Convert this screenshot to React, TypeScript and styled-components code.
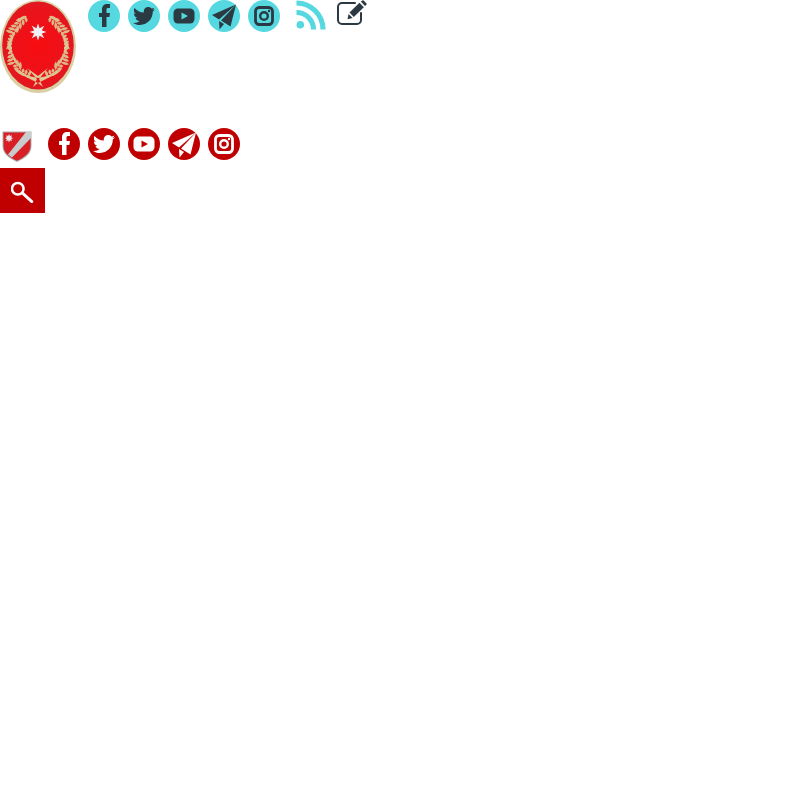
import React from "react";
import styled, { createGlobalStyle } from "styled-components";
import { FaTwitter } from "react-icons/fa";

const GlobalStyle = createGlobalStyle`
  html, body {
    margin: 0;
    padding: 0;
    background: #fff;
    font-family: "Liberation Sans", Arial, sans-serif;
  }
`;

const TopRow = styled.div`
  display: flex;
  align-items: flex-start;
  height: 128px;
`;

const LogoLink = styled.a`
  display: block;
  width: 76px;
  height: 93px;
  margin-right: 12px;
`;

const SocialList = styled.ul`
  display: flex;
  gap: 8px;
  margin: 0;
  padding: 0;
  list-style: none;
`;

const SocialItem = styled.li<{ $bg: string; $fg: string }>`
  display: flex;
  align-items: center;
  justify-content: center;
  width: 32px;
  height: 32px;
  border-radius: 50%;
  background: ${(p) => p.$bg};
  color: ${(p) => p.$fg};
`;

const RssLink = styled.a`
  display: block;
  width: 30px;
  height: 30px;
  margin-left: 16px;
  color: #55d8e0;
`;

const EditLink = styled.a`
  display: block;
  width: 31px;
  height: 26px;
  margin-left: 11px;
  color: #2b3a42;
`;

const BottomRow = styled.div`
  display: flex;
  align-items: flex-start;
  height: 40px;
`;

const ShieldLink = styled.a`
  display: block;
  width: 30px;
  height: 32px;
  margin: 3px 16px 0 2px;
`;

const SearchButton = styled.button`
  display: flex;
  align-items: center;
  justify-content: center;
  width: 45px;
  height: 45px;
  padding: 0;
  border: 0;
  background: #c00000;
  color: #fff;
`;

const FacebookIcon = () => (
  <svg width="32" height="32" viewBox="0 0 32 32">
    <path
      d="M14 27 V17 H11 V13 H14 V9.5 C14 6 16 4 19.5 4 H22 V8 H20 C18.8 8 18.5 8.7 18.5 9.8 V13 H22 L21.4 17 H18.5 V27 Z"
      fill="currentColor"
    />
  </svg>
);

const YoutubeIcon = () => (
  <svg width="22" height="16" viewBox="0 0 22 16">
    <rect x="0.5" y="0.5" width="21" height="15" rx="4.5" fill="currentColor" />
    <path d="M8.5 4.5 L15 8 L8.5 11.5 Z" fill="var(--hole)" />
  </svg>
);

const PlaneIcon = () => (
  <svg width="32" height="32" viewBox="0 0 32 32">
    <path d="M28 4.5 L4 15 L11 19.5 Z" fill="currentColor" />
    <path d="M28 4.5 L13 20.5 L22.5 26.5 Z" fill="currentColor" />
    <path d="M11 21 L11.5 29.5 L16 24 Z" fill="currentColor" />
  </svg>
);

const InstagramIcon = () => (
  <svg width="24" height="24" viewBox="0 0 24 24">
    <rect x="3.5" y="3.5" width="17" height="17" rx="3.8" fill="none" stroke="currentColor" strokeWidth="2.8" />
    <circle cx="12" cy="12" r="3.8" fill="none" stroke="currentColor" strokeWidth="2.4" />
    <circle cx="17" cy="7" r="1.2" fill="currentColor" />
  </svg>
);

const socials = (bg: string, fg: string) =>
  [
    <FacebookIcon key="fb" />,
    <FaTwitter size={22} key="tw" />,
    <YoutubeIcon key="yt" />,
    <PlaneIcon key="tg" />,
    <InstagramIcon key="ig" />,
  ].map((icon, i) => (
    <SocialItem key={i} $bg={bg} $fg={fg} style={{ ["--hole" as string]: bg }}>
      {icon}
    </SocialItem>
  ));

// leaves for the left branch of the laurel, the right one is mirrored
const leaves = Array.from({ length: 40 }, (_, i) => {
  const a = 0.32 + (i / 39) * 2.38;
  const x = 38 - 26 * Math.sin(a);
  const y = 46 + 33 * Math.cos(a);
  const len = 2.2 + ((i * 7) % 5) * 0.55;
  const rot = (-a * 180) / Math.PI + (i % 2 ? 42 : -42);
  return { x, y, len, rot };
});

const Leaf = ({ x, y, len, rot }: { x: number; y: number; len: number; rot: number }) => (
  <path
    d={`M0 0 Q3 ${-len} 0 ${-2 * len} Q-3 ${-len} 0 0 Z`}
    fill="#dcc995"
    fillOpacity="0.9"
    transform={`translate(${x} ${y}) rotate(${rot})`}
  />
);

const Crest = () => (
  <svg width="76" height="93" viewBox="0 0 76 93">
    <defs>
      <radialGradient id="red" cx="50%" cy="50%" r="58%">
        <stop offset="0%" stopColor="#f80c10" />
        <stop offset="75%" stopColor="#e8141c" />
        <stop offset="100%" stopColor="#d0222a" />
      </radialGradient>
    </defs>
    <ellipse cx="38" cy="46.5" rx="38" ry="46.5" fill="#d9cfa2" />
    <ellipse cx="38" cy="45.5" rx="35.8" ry="44" fill="url(#red)" />
    {leaves.map((l, i) => (
      <g key={i}>
        <Leaf {...l} />
        <Leaf x={76 - l.x} y={l.y} len={l.len} rot={-l.rot} />
      </g>
    ))}
    <path
      d="M27 68 L37 79 L33 87 L38 83 L43 87 L39 79 L48 68 L38 76 Z M20 74 L38 78 L56 74 L38 83 Z"
      fill="#dcc995"
    />
    <path
      d="M38 23.5 L39.6 28.2 L44.2 25.8 L41.8 30.4 L46.5 32 L41.8 33.6 L44.2 38.2 L39.6 35.8 L38 40.5 L36.4 35.8 L31.8 38.2 L34.2 33.6 L29.5 32 L34.2 30.4 L31.8 25.8 L36.4 28.2 Z"
      fill="#eef2f5"
    />
  </svg>
);

const Shield = () => (
  <svg width="30" height="32" viewBox="0 0 30 32">
    <path d="M0.5 0.5 H29.5 V15 C29.5 24 21 28 15 31 C9 28 0.5 24 0.5 15 Z" fill="#a9adaf" />
    <path d="M1.5 1.5 H28.5 V15 C28.5 23 20.5 27 15 29.8 C9.5 27 1.5 23 1.5 15 Z" fill="#d81f26" />
    <path d="M24 1 H29 V7 L10 26.5 L6 23.5 Z" fill="#c9cccc" />
    <path d="M7 3 L7.9 5.1 L10 4.2 L9.2 6.3 L11.2 7.2 L9.2 8.1 L10 10.2 L7.9 9.3 L7 11.4 L6.1 9.3 L4 10.2 L4.8 8.1 L2.8 7.2 L4.8 6.3 L4 4.2 L6.1 5.1 Z" fill="#e8e8e8" />
  </svg>
);

const RssIcon = () => (
  <svg width="30" height="30" viewBox="0 0 30 30">
    <circle cx="4.3" cy="24.7" r="3.8" fill="currentColor" />
    <path d="M0.5 12.5 A17 17 0 0 1 17.5 29.5" fill="none" stroke="currentColor" strokeWidth="5.2" />
    <path d="M0.5 3 A26.5 26.5 0 0 1 27 29.5" fill="none" stroke="currentColor" strokeWidth="5.2" />
  </svg>
);

const EditIcon = () => (
  <svg width="31" height="26" viewBox="0 0 31 26">
    <path
      d="M18 3 H5 A4 4 0 0 0 1 7 V20 A4 4 0 0 0 5 24 H20 A4 4 0 0 0 24 20 V13"
      fill="none"
      stroke="currentColor"
      strokeWidth="2"
      strokeLinecap="round"
    />
    <path d="M12.5 12.5 L22.5 2.8 L26.8 7.2 L16.8 17 Z" fill="currentColor" />
    <path d="M10.5 19.2 L11.6 14 L15.6 18 Z" fill="currentColor" />
    <path d="M23.8 1.6 L25.4 0.4 Q26 0 26.6 0.5 L29.5 3.4 Q30 4 29.5 4.6 L28 6 Z" fill="currentColor" />
  </svg>
);

const SearchIcon = () => (
  <svg width="24" height="24" viewBox="0 0 24 24">
    <circle cx="6.8" cy="9.8" r="5.8" fill="none" stroke="currentColor" strokeWidth="2.5" />
    <path d="M11.5 14.2 L20.8 22.6" stroke="currentColor" strokeWidth="2.9" strokeLinecap="round" />
  </svg>
);

export default function App() {
  return (
    <>
      <GlobalStyle />
      <header>
        <TopRow>
          <LogoLink>
            <Crest />
          </LogoLink>
          <SocialList>{socials("#55d8e0", "#2b3a42")}</SocialList>
          <RssLink>
            <RssIcon />
          </RssLink>
          <EditLink>
            <EditIcon />
          </EditLink>
        </TopRow>
        <BottomRow>
          <ShieldLink>
            <Shield />
          </ShieldLink>
          <SocialList>{socials("#c00000", "#fff")}</SocialList>
        </BottomRow>
        <SearchButton aria-label="Cerca">
          <SearchIcon />
        </SearchButton>
      </header>
    </>
  );
}
